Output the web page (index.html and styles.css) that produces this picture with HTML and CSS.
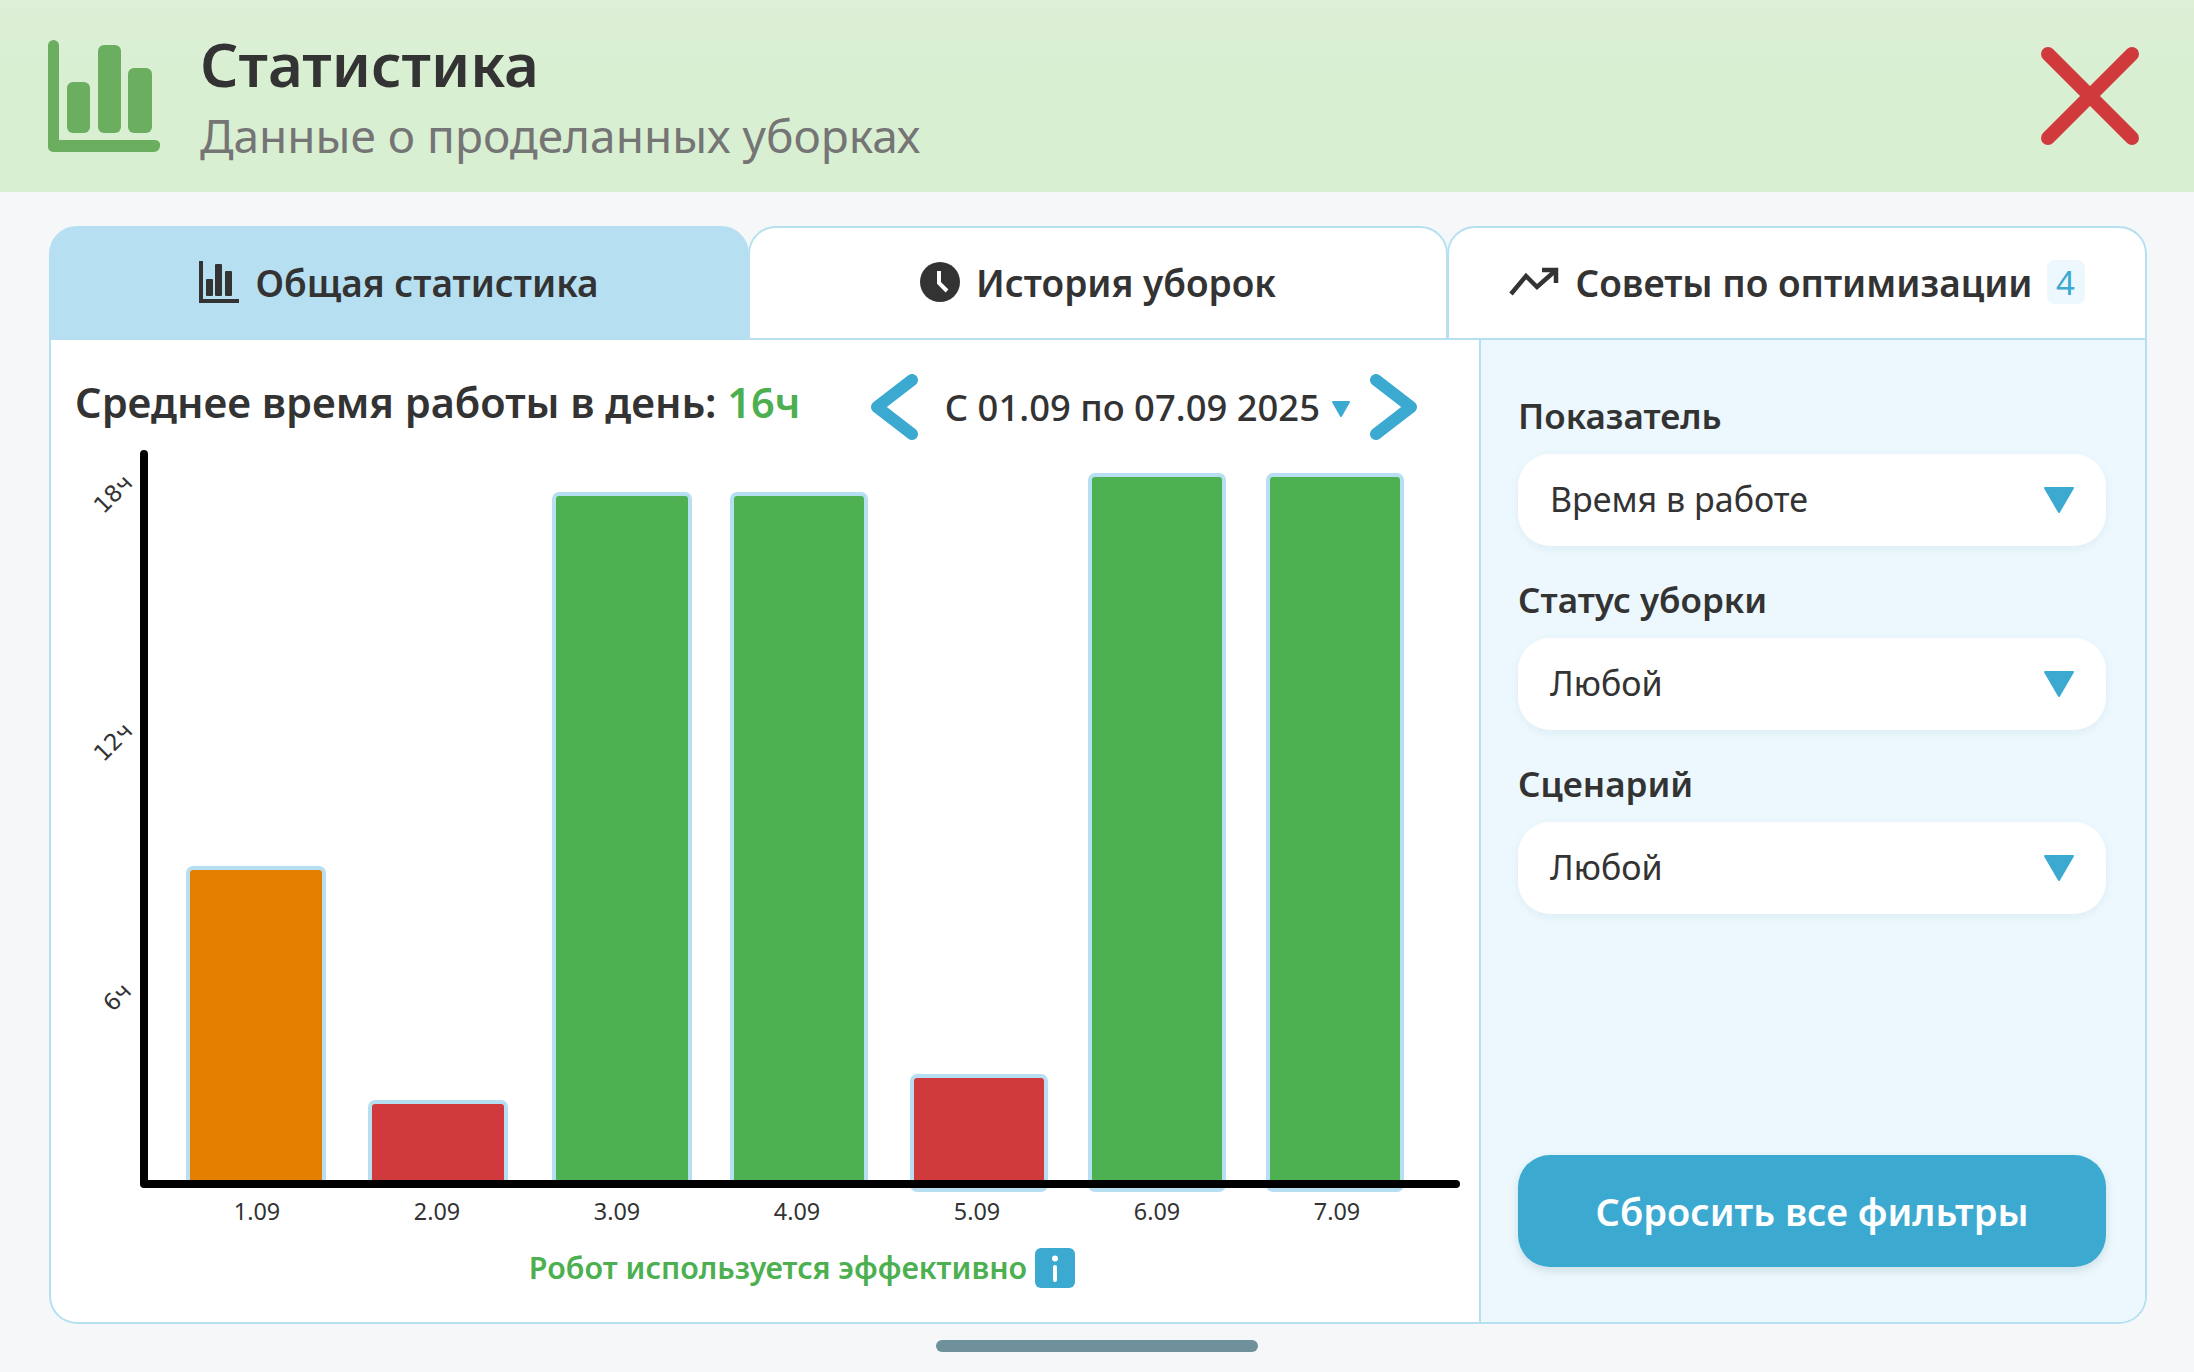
FILE: index.html
```html
<!DOCTYPE html>
<html lang="ru">
<head>
<meta charset="utf-8">
<title>Статистика</title>
<link rel="stylesheet" href="styles.css">
</head>
<body>
<header class="top">
  <svg class="top-icon" viewBox="0 0 112 112" aria-hidden="true">
    <path class="logo-fill" d="M5.500 0A5.500 5.500 0 0 1 11 5.500V100H107a5 5 0 0 1 5 6 6 6 0 0 1-6 6H5a5 5 0 0 1-5-5V5.500A5.500 5.500 0 0 1 5.500 0Z"/>
    <rect class="logo-fill" x="19" y="42" width="23" height="51" rx="6"/>
    <rect class="logo-fill" x="50" y="5" width="23" height="88" rx="6"/>
    <rect class="logo-fill" x="80" y="28" width="24" height="65" rx="6"/>
  </svg>
  <div class="top-text">
    <h1 class="top-title">Статистика</h1>
    <p class="top-sub">Данные о проделанных уборках</p>
  </div>
  <svg class="close" viewBox="0 0 98 98" aria-hidden="true">
    <path class="close-x" d="M7 7 91 91M91 7 7 91"/>
  </svg>
</header>

<main class="page">
  <nav class="tabs">
    <div class="tab tab-active">
      <svg class="tab-icon" viewBox="0 0 40 42" aria-hidden="true">
        <path class="ink" d="M0 0H4V38H40V42H0Z"/>
        <rect class="ink" x="7" y="18" width="7" height="17" rx="1"/>
        <rect class="ink" x="16" y="3" width="7" height="32" rx="1"/>
        <rect class="ink" x="26" y="10" width="7" height="25" rx="1"/>
      </svg>
      <span>Общая статистика</span>
    </div>
    <div class="tab">
      <svg class="tab-icon" viewBox="0 0 40 42" aria-hidden="true">
        <circle class="ink" cx="20" cy="21" r="20"/>
        <path class="clock-hand" d="M19 10V22L27 30"/>
      </svg>
      <span>История уборок</span>
    </div>
    <div class="tab">
      <svg class="tab-icon tab-icon-wide" viewBox="0 0 50 30" aria-hidden="true">
        <path class="trend" d="M2 27 17 9 28 20 46 4"/>
        <path class="trend" d="M33 3H47V16"/>
      </svg>
      <span>Советы по оптимизации</span>
      <span class="badge">4</span>
    </div>
  </nav>

  <section class="card">
    <div class="stats">
      <div class="stats-head">
        <h2 class="avg">Среднее время работы в день: <b class="avg-val">16ч</b></h2>
        <div class="range">
          <svg class="chev" viewBox="0 0 50 68" aria-hidden="true"><path class="chev-line" d="M43 7 8 34 43 61"/></svg>
          <span class="range-text">С 01.09 по 07.09 2025</span>
          <svg class="range-caret" viewBox="0 0 20 18" aria-hidden="true"><path class="tri" d="M2 2H18L10 16Z"/></svg>
          <svg class="chev" viewBox="0 0 50 68" aria-hidden="true"><path class="chev-line" d="M7 7 42 34 7 61"/></svg>
        </div>
      </div>

      <svg class="chart" viewBox="51 446 1428 784" role="img">
        <rect class="bar orange" x="188" y="868" width="136" height="318" rx="5"/>
        <rect class="bar red" x="370" y="1102" width="136" height="84" rx="5"/>
        <rect class="bar green" x="554" y="494" width="136" height="692" rx="5"/>
        <rect class="bar green" x="732" y="494" width="134" height="692" rx="5"/>
        <rect class="bar red" x="912" y="1076" width="134" height="114" rx="5"/>
        <rect class="bar green" x="1090" y="475" width="134" height="715" rx="5"/>
        <rect class="bar green" x="1268" y="475" width="134" height="715" rx="5"/>
        <path class="axis" d="M144 454V1184H1456"/>
        <text class="ylab" transform="translate(113 494) rotate(-45)">18ч</text>
        <text class="ylab" transform="translate(113 742) rotate(-45)">12ч</text>
        <text class="ylab" transform="translate(117 997) rotate(-45)">6ч</text>
        <text class="xlab" x="257" y="1220">1.09</text>
        <text class="xlab" x="437" y="1220">2.09</text>
        <text class="xlab" x="617" y="1220">3.09</text>
        <text class="xlab" x="797" y="1220">4.09</text>
        <text class="xlab" x="977" y="1220">5.09</text>
        <text class="xlab" x="1157" y="1220">6.09</text>
        <text class="xlab" x="1337" y="1220">7.09</text>
      </svg>

      <div class="status">
        <span class="status-text">Робот используется эффективно</span>
        <svg class="info" viewBox="0 0 40 40" aria-hidden="true">
          <rect class="info-bg" width="40" height="40" rx="6"/>
          <circle class="info-i" cx="20" cy="10.500" r="3"/>
          <rect class="info-i" x="18" y="17" width="4" height="17" rx="2"/>
        </svg>
      </div>
    </div>

    <aside class="filters">
      <div class="field">
        <span class="field-label">Показатель</span>
        <div class="select"><span>Время в работе</span><svg class="select-caret" viewBox="0 0 32 28" aria-hidden="true"><path class="tri" d="M2 2H30L16 26Z"/></svg></div>
      </div>
      <div class="field">
        <span class="field-label">Статус уборки</span>
        <div class="select"><span>Любой</span><svg class="select-caret" viewBox="0 0 32 28" aria-hidden="true"><path class="tri" d="M2 2H30L16 26Z"/></svg></div>
      </div>
      <div class="field">
        <span class="field-label">Сценарий</span>
        <div class="select"><span>Любой</span><svg class="select-caret" viewBox="0 0 32 28" aria-hidden="true"><path class="tri" d="M2 2H30L16 26Z"/></svg></div>
      </div>
      <button class="reset" type="button">Сбросить все фильтры</button>
    </aside>
  </section>

  <div class="home-bar"></div>
</main>
</body>
</html>
```

FILE: styles.css
```css
* { box-sizing: border-box; }

html, body {
  margin: 0;
  height: 1372px;
  overflow: hidden;
}

body {
  display: flex;
  flex-direction: column;
  background: #f5f7f9;
  color: #333;
  font-family: "Noto Sans", "Open Sans", sans-serif;
}

/* Header */
.top {
  height: 192px;
  flex: none;
  display: flex;
  align-items: center;
  padding: 0 55px 0 48px;
  background: linear-gradient(#dcf0d7, #d9efd2 40%);
}

.top-icon { width: 112px; height: 112px; flex: none; }
.logo-fill { fill: #6cae60; }

.top-text { flex: 1; margin: 12px 0 0 40px; }

.top-title {
  margin: 0;
  font-size: 60px;
  line-height: 66px;
  font-weight: 600;
  color: #333;
}

.top-sub {
  margin: 0;
  font-size: 46px;
  line-height: 77px;
  font-weight: 400;
  color: #757575;
}

.close { width: 98px; height: 98px; flex: none; }
.close-x { fill: none; stroke: #d03a3c; stroke-width: 14; stroke-linecap: round; }

/* Page */
.page {
  flex: 1;
  display: flex;
  flex-direction: column;
  padding: 34px 47px 0 49px;
  min-height: 0;
}

.tabs {
  display: grid;
  grid-template-columns: 700px 699px 699px;
  height: 114px;
  flex: none;
}

.tab {
  display: flex;
  align-items: center;
  justify-content: center;
  gap: 16px;
  padding-bottom: 2px;
  background: #fff;
  border: 2px solid #b6e0f2;
  border-radius: 28px 28px 0 0;
  font-size: 37px;
  font-weight: 600;
  color: #333;
}

.tab + .tab { margin-left: -1px; }

.tab-active { background: #b6e0f2; border-color: #b6e0f2; }

.tab-icon { width: 40px; height: 42px; flex: none; }
.tab-icon-wide { width: 50px; height: 30px; }
.ink { fill: #333; }
.clock-hand { fill: none; stroke: #fff; stroke-width: 4; }
.trend { fill: none; stroke: #333; stroke-width: 4.500; }

.badge {
  width: 38px;
  height: 44px;
  display: flex;
  align-items: center;
  justify-content: center;
  border-radius: 8px;
  background: #ecf8fd;
  color: #3ca9d1;
  font-weight: 400;
  font-size: 33px;
  margin-left: -2px;
}

/* Card */
.card {
  height: 984px;
  flex: none;
  display: flex;
  background: #fff;
  border: 2px solid #b6e0f2;
  border-top: 0;
  border-radius: 0 0 28px 28px;
  overflow: hidden;
}

.stats {
  width: 1428px;
  flex: none;
  display: flex;
  flex-direction: column;
}

.stats-head {
  display: flex;
  align-items: center;
  justify-content: space-between;
  height: 106px;
  padding: 24px 60px 0 24px;
  flex: none;
}

.avg {
  margin: 0 0 6px;
  font-size: 41.500px;
  font-weight: 600;
  color: #333;
}

.avg-val { font-weight: 600; color: #4caf50; }

.range { display: flex; align-items: center; margin-top: 3px; }

.chev { width: 50px; height: 68px; flex: none; }
.chev-line {
  fill: none;
  stroke: #3ca9d1;
  stroke-width: 12;
  stroke-linecap: round;
  stroke-linejoin: round;
}

.range-text {
  margin-left: 26px;
  font-size: 36.400px;
  font-weight: 500;
  color: #333;
}

.range-caret { width: 20px; height: 18px; margin: 4px 18px 0 11px; flex: none; }
.tri { fill: #3ca9d1; stroke: #3ca9d1; stroke-width: 2; stroke-linejoin: round; }

.chart { display: block; width: 1428px; height: 784px; flex: none; }

.bar { stroke: #b6e0f2; stroke-width: 4; }
.orange { fill: #e57f00; }
.red { fill: #d03a3c; }
.green { fill: #4db051; }

.axis { fill: none; stroke: #000; stroke-width: 8; stroke-linecap: round; stroke-linejoin: round; }

.ylab {
  font-family: "DejaVu Sans", sans-serif;
  font-size: 23px;
  fill: #333;
  text-anchor: middle;
  dominant-baseline: central;
}

.xlab {
  font-size: 23.400px;
  fill: #333;
  text-anchor: middle;
}

.status {
  display: flex;
  align-items: center;
  justify-content: center;
  gap: 8px;
  margin-top: 17px;
  padding-left: 74px;
}

.status-text { font-size: 30.400px; font-weight: 600; color: #4caf50; }

.info { width: 40px; height: 40px; flex: none; }
.info-bg { fill: #3ca9d1; }
.info-i { fill: #fff; }

/* Filters */
.filters {
  flex: 1;
  display: flex;
  flex-direction: column;
  padding: 53px 39px 55px 37px;
  background: #ecf8fd;
  border-left: 2px solid #b6e0f2;
}

.field { display: flex; flex-direction: column; }

.field-label {
  height: 61px;
  font-size: 35px;
  line-height: 46px;
  font-weight: 600;
  color: #333;
}

.select {
  height: 92px;
  margin-bottom: 31px;
  padding: 0 31px 2px 32px;
  display: flex;
  align-items: center;
  justify-content: space-between;
  background: #fff;
  border-radius: 32px;
  box-shadow: 0 3px 8px rgba(60, 120, 150, 0.08);
  font-size: 34px;
  color: #333;
}

.select-caret { width: 32px; height: 28px; flex: none; margin-top: 2px; }

.reset {
  margin-top: auto;
  height: 112px;
  flex: none;
  border: 0;
  border-radius: 32px;
  background: #3ca9d1;
  color: #fff;
  font-family: inherit;
  font-size: 38px;
  font-weight: 600;
  box-shadow: 0 4px 10px rgba(40, 90, 110, 0.15);
}

.home-bar {
  width: 322px;
  height: 12px;
  margin: 16px 0 0 887px;
  flex: none;
  border-radius: 6px;
  background: #6f919b;
}
```
